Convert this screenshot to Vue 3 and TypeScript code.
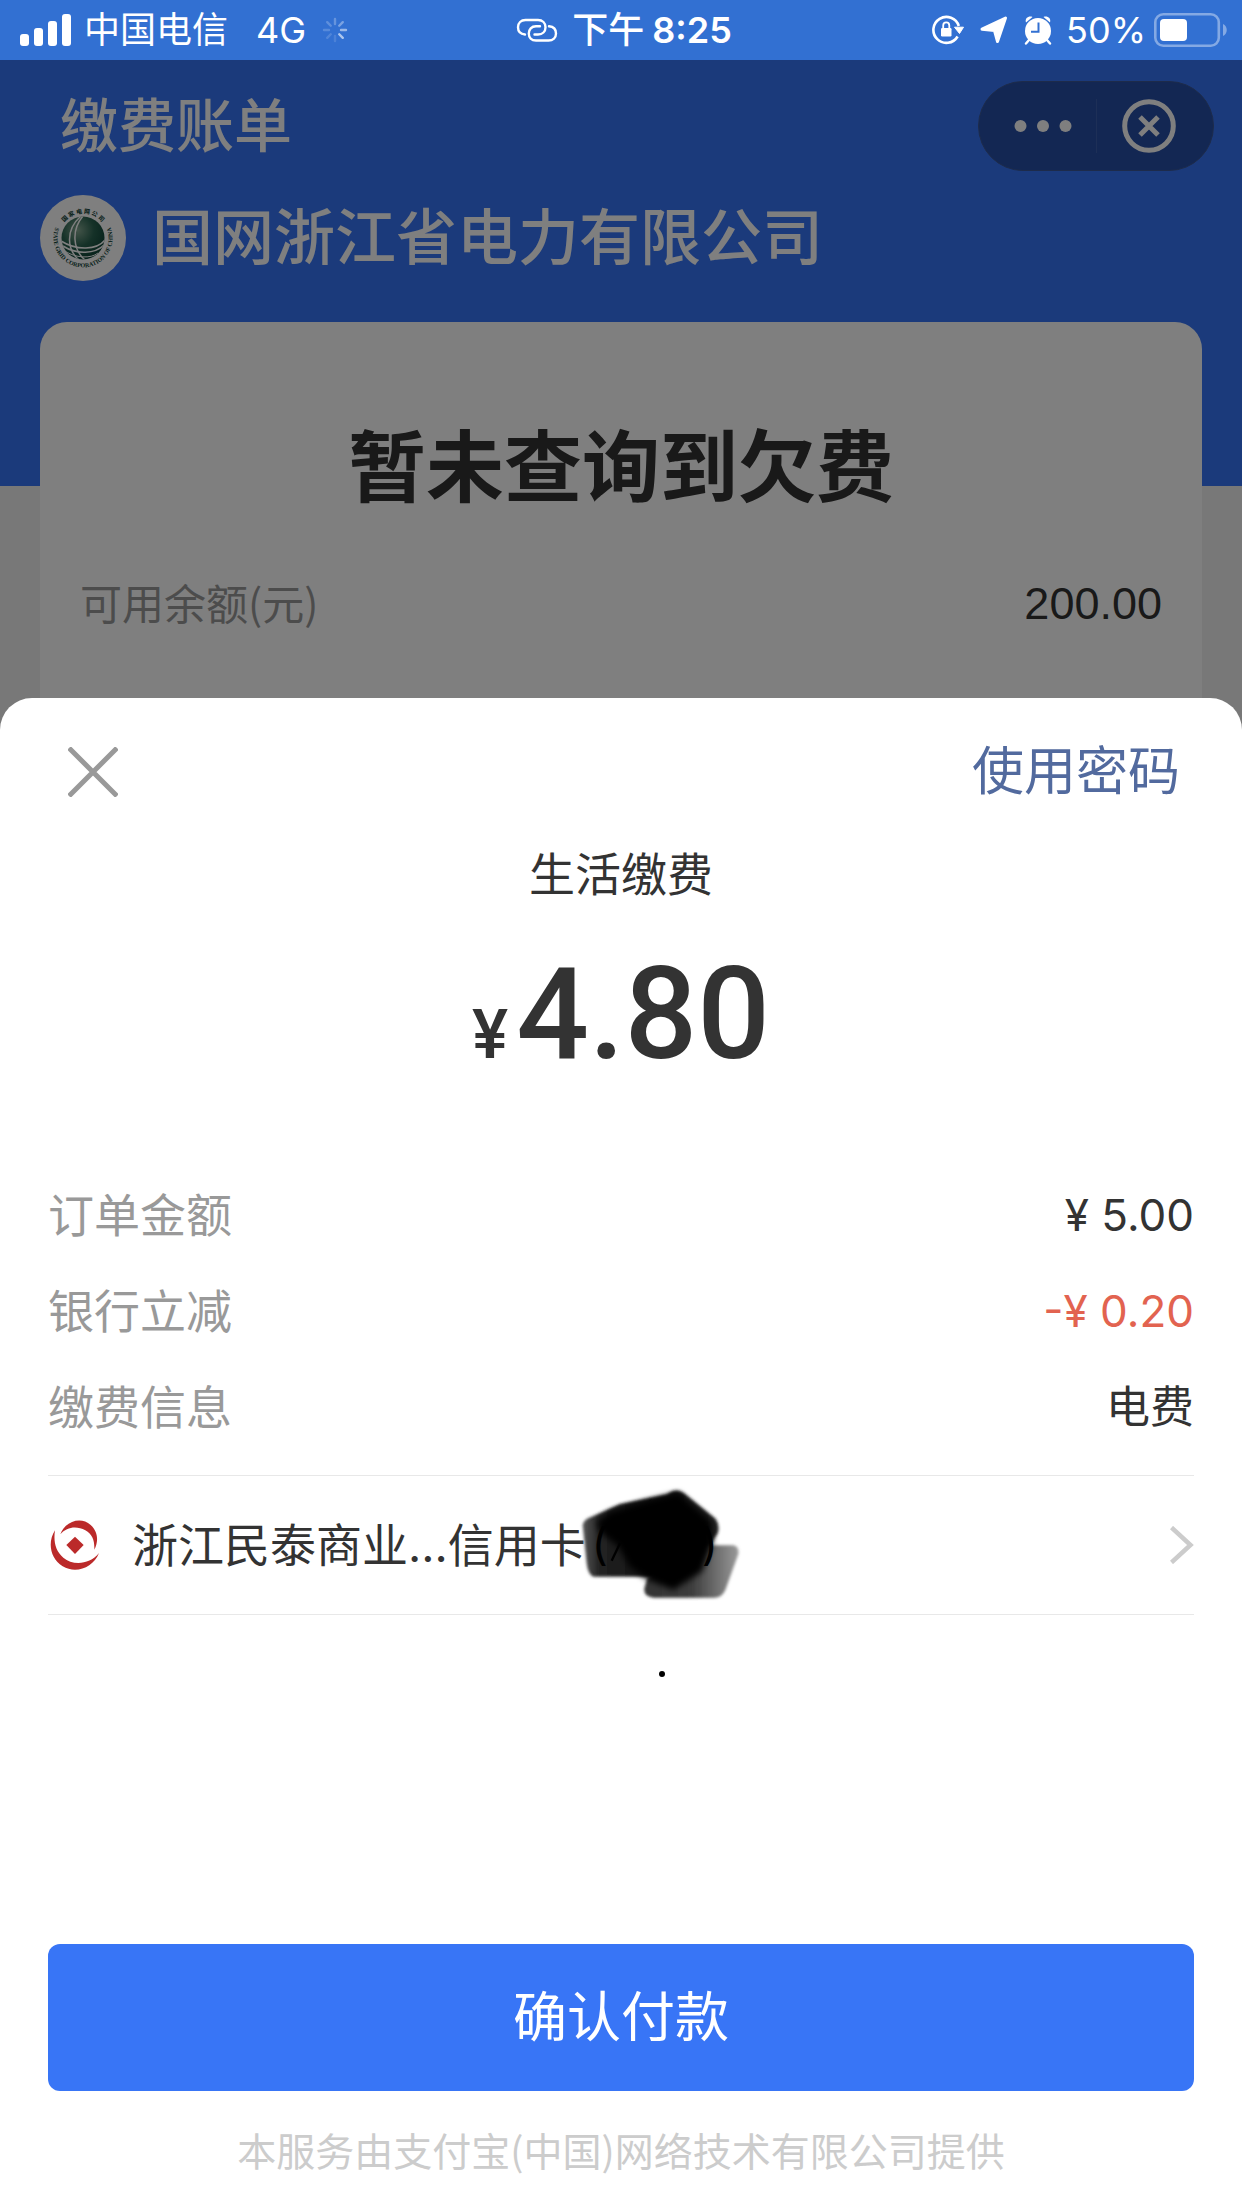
<script setup lang="ts">
interface DetailRow {
  label: string
  value: string
  discount?: boolean
}

const details: DetailRow[] = [
  { label: '订单金额', value: '¥ 5.00' },
  { label: '银行立减', value: '-¥ 0.20', discount: true },
  { label: '缴费信息', value: '电费' },
]

const spinner = [
  { angle: 0, opacity: 0.25 },
  { angle: 45, opacity: 0.35 },
  { angle: 90, opacity: 0.5 },
  { angle: 135, opacity: 0.6 },
  { angle: 180, opacity: 0.12 },
  { angle: 225, opacity: 0.15 },
  { angle: 270, opacity: 0.18 },
  { angle: 315, opacity: 0.22 },
]
</script>

<template>
  <div class="app">
    <header class="status">
      <div class="status-side">
        <svg class="signal" width="52" height="32" viewBox="0 0 52 32" fill="#fff" aria-hidden="true">
          <rect x="0" y="20" width="9" height="12" rx="3" />
          <rect x="14" y="14" width="9" height="18" rx="3" />
          <rect x="28" y="7" width="9" height="25" rx="3" />
          <rect x="42" y="0" width="9" height="32" rx="3" />
        </svg>
        <span class="carrier">中国电信</span>
        <span class="network">4G</span>
        <svg width="26" height="26" viewBox="-13 -13 26 26" aria-hidden="true">
          <line
            v-for="s in spinner"
            :key="s.angle"
            x1="0"
            y1="-6"
            x2="0"
            y2="-11"
            stroke="#fff"
            stroke-width="2.4"
            stroke-linecap="round"
            :opacity="s.opacity"
            :transform="`rotate(${s.angle})`"
          />
        </svg>
      </div>
      <div class="status-time">
        <svg width="42" height="26" viewBox="0 0 42 26" fill="none" stroke="#fff" stroke-width="2.4" stroke-linecap="round" aria-hidden="true">
          <path d="M9 17.500C4.500 17 2 14 2 10.200C2 6 5 3 9.500 3H22C26.500 3 29.500 6 29.500 10.200C29.500 14.500 26.500 17.500 22 17.500H18.500" />
          <path d="M33 9.300C37.500 9.800 40 12.500 40 16.500C40 20.700 37 23.500 32.500 23.500H20C15.500 23.500 12.800 20.700 12.800 16.500C12.800 12.200 15.500 9.300 20 9.300H24" />
        </svg>
        <span class="period">下午</span>
        <span class="clock">8:25</span>
      </div>
      <div class="status-side status-right">
        <svg width="32" height="30" viewBox="0 0 32 30" aria-hidden="true">
          <path d="M25.600 21.500A13 13 0 1 1 26.800 11" fill="none" stroke="#fff" stroke-width="2.600" />
          <path d="M22.500 12.200H31.500L27.500 18.500Z" fill="#fff" stroke="#fff" stroke-linejoin="round" />
          <rect x="9" y="13" width="10.500" height="8.500" rx="1.200" fill="#fff" />
          <path d="M11.200 13.500V10.500A3 3 0 0 1 17.300 10.500V13.500" fill="none" stroke="#fff" stroke-width="1.800" />
        </svg>
        <svg class="locate" width="28" height="28" viewBox="0 0 28 28" aria-hidden="true">
          <path d="M2 13.200L25.500 2L17.500 25.500L14.500 14.500Z" fill="#fff" stroke="#fff" stroke-width="3" stroke-linejoin="round" />
        </svg>
        <svg class="alarm" width="28" height="30" viewBox="0 0 28 30" aria-hidden="true">
          <path d="M2 7.500C0.500 3 5 .500 8.500 2ZM26 7.500C27.500 3 23 .500 19.500 2Z" fill="#fff" />
          <circle cx="14" cy="16" r="13" fill="#fff" />
          <path d="M14.500 7.500V16.800H7" fill="none" stroke="#3270d2" stroke-width="2" />
          <path d="M5 25L2 28.500M23 25L26 28.500" stroke="#fff" stroke-width="2.400" stroke-linecap="round" />
        </svg>
        <span class="percent">50%</span>
        <svg width="74" height="34" viewBox="0 0 74 34" aria-hidden="true">
          <rect x="1.300" y="1.300" width="63.500" height="31.400" rx="8" fill="none" stroke="#84a9e4" stroke-width="2.600" />
          <rect x="6" y="6" width="27" height="22" rx="4" fill="#fff" />
          <path d="M69 11C74 13 74 21 69 23Z" fill="#84a9e4" />
        </svg>
      </div>
    </header>

    <main class="bill">
      <div class="bill-head">
        <div class="title-row">
          <h1>缴费账单</h1>
          <div class="capsule">
            <button type="button" class="more" aria-label="更多">
              <svg width="60" height="14" viewBox="0 0 60 14" fill="#fff"><circle cx="7.500" cy="7" r="6" /><circle cx="30" cy="7" r="6" /><circle cx="52.500" cy="7" r="6" /></svg>
            </button>
            <span class="divider"></span>
            <button type="button" class="exit" aria-label="退出">
              <svg width="54" height="54" viewBox="0 0 54 54" fill="none" stroke="#fff" stroke-width="5"><circle cx="27" cy="27" r="24.300" /><path d="M18 18L36 36M36 18L18 36" /></svg>
            </button>
          </div>
        </div>
        <div class="company">
          <svg width="86" height="86" viewBox="-43 -43 86 86" role="img" aria-label="国家电网">
            <defs>
              <radialGradient id="globe" cx=".38" cy=".32" r=".75">
                <stop offset="0" stop-color="#86a892" />
                <stop offset=".5" stop-color="#2a6350" />
                <stop offset="1" stop-color="#0b4033" />
              </radialGradient>
              <clipPath id="globe-clip"><circle r="21.500" /></clipPath>
              <path id="ring-top" d="M-23.500 -7A24.500 24.500 0 0 1 23.500 -7" />
              <path id="ring-bottom" d="M-27 -12A29.500 29.500 0 1 0 27 -12" />
            </defs>
            <circle r="43" fill="#fff" />
            <circle r="21.500" fill="url(#globe)" />
            <g clip-path="url(#globe-clip)" fill="none" stroke="#fff" stroke-width="1.500">
              <path d="M-2 -22C-18 -8 -16 12 -4 22M0 -22C-12 -8 -10 12 2 22" />
              <path d="M-22 3C-6 13 14 12 22 2M-20 8C-6 17 12 16 21 7" />
              <path d="M-18 13C-8 20 8 21 15 15" stroke-width="1" />
            </g>
            <text class="ring-cn"><textPath href="#ring-top" startOffset="50%" text-anchor="middle">国 家 电 网 公 司</textPath></text>
            <text class="ring-en"><textPath href="#ring-bottom" startOffset="50%" text-anchor="middle">STATE GRID CORPORATION OF CHINA</textPath></text>
          </svg>
          <span>国网浙江省电力有限公司</span>
        </div>
      </div>
      <section class="card">
        <h2>暂未查询到欠费</h2>
        <div class="balance">
          <span class="balance-label">可用余额(元)</span>
          <span class="balance-value">200.00</span>
        </div>
      </section>
    </main>

    <section class="sheet" role="dialog" aria-label="付款">
      <div class="sheet-head">
        <button type="button" aria-label="关闭">
          <svg width="50" height="50" viewBox="0 0 50 50" stroke="#999" stroke-width="5"><path d="M1 1L49 49M49 1L1 49" /></svg>
        </button>
        <button type="button" class="use-password">使用密码</button>
      </div>
      <p class="subject">生活缴费</p>
      <p class="amount"><span class="currency">¥</span>4.80</p>
      <dl class="details">
        <div v-for="row in details" :key="row.label" class="detail">
          <dt>{{ row.label }}</dt>
          <dd :class="{ discount: row.discount }">{{ row.value }}</dd>
        </div>
      </dl>
      <button type="button" class="bank">
        <svg class="bank-logo" width="50" height="52" viewBox="0 0 150 156" fill="#bb2a2a" aria-hidden="true">
          <path d="M15 34C-8 70 0 118 38 142C78 166 130 146 147 102C118 138 68 140 40 116C16 96 10 66 15 34Z" />
          <path d="M31 46C44 8 92 -10 122 18C146 40 145 68 133 92C134 66 128 46 106 34C80 20 50 24 31 46Z" />
          <path d="M75 53L101 78L75 105L49 78Z" />
        </svg>
        <span class="bank-name">浙江民泰商业...信用卡</span>
        <svg class="scribble" width="168" height="118" viewBox="48 78 504 354" aria-hidden="true">
          <defs>
            <filter id="soft" x="-10%" y="-10%" width="120%" height="120%"><feGaussianBlur stdDeviation="5" /></filter>
            <filter id="softer" x="-20%" y="-20%" width="140%" height="140%"><feGaussianBlur stdDeviation="10" /></filter>
            <linearGradient id="fade-left" x1="0" y1="0" x2="1" y2="0">
              <stop offset="0" stop-color="#555" />
              <stop offset=".12" stop-color="#222" />
              <stop offset=".5" stop-color="#111" />
              <stop offset="1" stop-color="#222" />
            </linearGradient>
            <linearGradient id="fade-right" x1="0" y1="0" x2="1" y2="0">
              <stop offset="0" stop-color="#333" />
              <stop offset=".5" stop-color="#3c3c3c" />
              <stop offset="1" stop-color="#999" />
            </linearGradient>
          </defs>
          <path d="M68 195Q70 178 95 170L180 132L320 103Q350 80 375 102L465 175Q480 195 474 218L460 240L410 350L100 350Q84 345 80 310Z" fill="url(#fade-left)" filter="url(#soft)" />
          <path d="M262 355L420 256L520 256Q538 260 535 282L496 390Q486 412 465 413L280 413Q250 410 253 385Z" fill="url(#fade-right)" filter="url(#soft)" />
          <path d="M110 185L150 155L260 122L355 98L455 185L458 250L425 335L340 390L265 360L210 320L175 260L120 215Z" fill="#000" filter="url(#softer)" />
          <path d="M180 250L155 302" stroke="#000" stroke-width="7" />
          <text x="95" y="300" class="scribble-mark">(</text>
          <text x="425" y="300" class="scribble-mark">)</text>
        </svg>
        <svg class="chevron" width="24" height="38" viewBox="0 0 24 38" fill="none" stroke="#ccc" stroke-width="4.500" aria-hidden="true"><path d="M1.500 1.500L20.500 19L1.500 36.500" /></svg>
      </button>
      <svg class="speck" width="6" height="6" viewBox="0 0 6 6" aria-hidden="true"><circle cx="3" cy="3" r="3" /></svg>
      <div class="sheet-foot">
        <button type="button" class="pay">确认付款</button>
        <p class="provider">本服务由支付宝(中国)网络技术有限公司提供</p>
      </div>
    </section>
  </div>
</template>

<style>
body {
  margin: 0;
}
</style>

<style scoped>
.app {
  display: flex;
  flex-direction: column;
  min-height: 100vh;
  background: #787878;
  color: #333;
  font-family: Inter, "Noto Sans CJK SC", sans-serif;
}
h1,
h2,
p,
dl,
dd {
  margin: 0;
}
svg {
  display: block;
  flex: none;
}
button {
  padding: 0;
  border: 0;
  background: none;
  color: inherit;
  font: inherit;
  cursor: pointer;
}
.status {
  display: grid;
  grid-template-columns: 1fr auto 1fr;
  align-items: center;
  height: 60px;
  padding: 0 14px 0 20px;
  background: #3270d2;
  color: #fff;
  font-size: 36px;
  line-height: 60px;
}
.status-side,
.status-time {
  display: flex;
  align-items: center;
}
.carrier {
  margin-left: 12px;
}
.network {
  margin: 0 16px 0 28px;
}
.period {
  margin: 0 8px 0 14px;
  font-weight: 500;
}
.clock {
  font-weight: 600;
}
.status-right {
  justify-content: flex-end;
}
.locate {
  margin: 0 16px;
}
.percent {
  margin: 0 8px 0 14px;
}
.bill {
  position: relative;
  background: #f1f1f1;
}
.bill::after {
  content: "";
  position: absolute;
  inset: 0;
  background: rgba(0, 0, 0, 0.5);
}
.bill-head {
  padding: 21px 28px 205px 40px;
  background: #3674f6;
  color: #fff;
  font-weight: 500;
}
.title-row {
  display: flex;
  align-items: center;
  justify-content: space-between;
  padding-left: 20px;
}
h1 {
  font-size: 58px;
  line-height: 90px;
  font-weight: 500;
}
.capsule {
  display: flex;
  align-items: center;
  box-sizing: border-box;
  width: 236px;
  height: 90px;
  border: 1px solid #3b5796;
  border-radius: 45px;
  background: #264ea6;
}
.capsule button {
  display: flex;
  flex: 1;
  align-items: center;
  justify-content: center;
  height: 100%;
}
.capsule .more {
  padding-left: 12px;
}
.capsule .exit {
  padding-right: 12px;
}
.divider {
  width: 1px;
  height: 54px;
  background: #3b5fae;
}
.company {
  display: flex;
  align-items: center;
  gap: 26px;
  margin-top: 24px;
  font-size: 61px;
  line-height: 86px;
}
.ring-cn {
  fill: #0b4033;
  font: 700 6px "Noto Sans CJK SC", sans-serif;
}
.ring-en {
  fill: #0b4033;
  font: 700 6px "Liberation Serif", serif;
}
.card {
  margin: -164px 40px 0;
  padding: 96px 40px;
  border-radius: 27px 27px 0 0;
  background: #fff;
}
h2 {
  font-size: 78px;
  line-height: 100px;
  font-weight: 700;
  text-align: center;
}
.balance {
  display: flex;
  justify-content: space-between;
  margin-top: 56px;
  line-height: 60px;
}
.balance-label {
  color: #999;
  font-family: "Noto Sans CJK SC", sans-serif;
  font-size: 42px;
  line-height: 56px;
}
.balance-value {
  font-family: "Liberation Sans", sans-serif;
  font-size: 45px;
}
.sheet {
  position: relative;
  display: flex;
  flex: 1;
  flex-direction: column;
  margin-top: -32px;
  padding: 44px 48px 30px;
  border-radius: 32px 32px 0 0;
  background: #fff;
}
.sheet-head {
  display: flex;
  align-items: center;
  justify-content: space-between;
  padding: 0 14px 0 20px;
}
.use-password {
  color: #526a9e;
  font-size: 52px;
  line-height: 60px;
}
.subject {
  margin-top: 42px;
  font-size: 46px;
  line-height: 60px;
  text-align: center;
}
.amount {
  margin-top: 44px;
  font-family: Roboto, sans-serif;
  font-size: 128px;
  line-height: 132px;
  font-weight: 500;
  text-align: center;
}
.currency {
  margin-right: 8px;
  font-size: 68px;
  line-height: 68px;
}
.details {
  margin-top: 87px;
  padding-bottom: 20px;
  font-size: 46px;
  line-height: 96px;
}
.detail {
  display: flex;
  justify-content: space-between;
}
dt {
  color: #999;
}
dd {
  font-size: 44px;
}
.discount {
  color: #e26350;
}
.bank {
  display: flex;
  align-items: center;
  height: 140px;
  border: solid #e8e8e8;
  border-width: 1px 0;
  font-size: 46px;
  line-height: 60px;
  text-align: left;
}
.bank-logo {
  margin: 0 32px 0 2px;
}
.scribble {
  margin-left: -10px;
}
.scribble-mark {
  fill: #000;
  font: 132px Inter, sans-serif;
}
.chevron {
  margin-left: auto;
}
.speck {
  margin: 56px 0 40px 611px;
}
.sheet-foot {
  margin-top: auto;
  text-align: center;
}
.pay {
  width: 100%;
  border-radius: 12px;
  background: #3875f6;
  color: #fff;
  font-size: 54px;
  line-height: 147px;
}
.provider {
  margin-top: 29px;
  color: #ccc;
  font-family: "Noto Sans CJK SC", sans-serif;
  font-size: 39px;
  line-height: 58px;
}
</style>
